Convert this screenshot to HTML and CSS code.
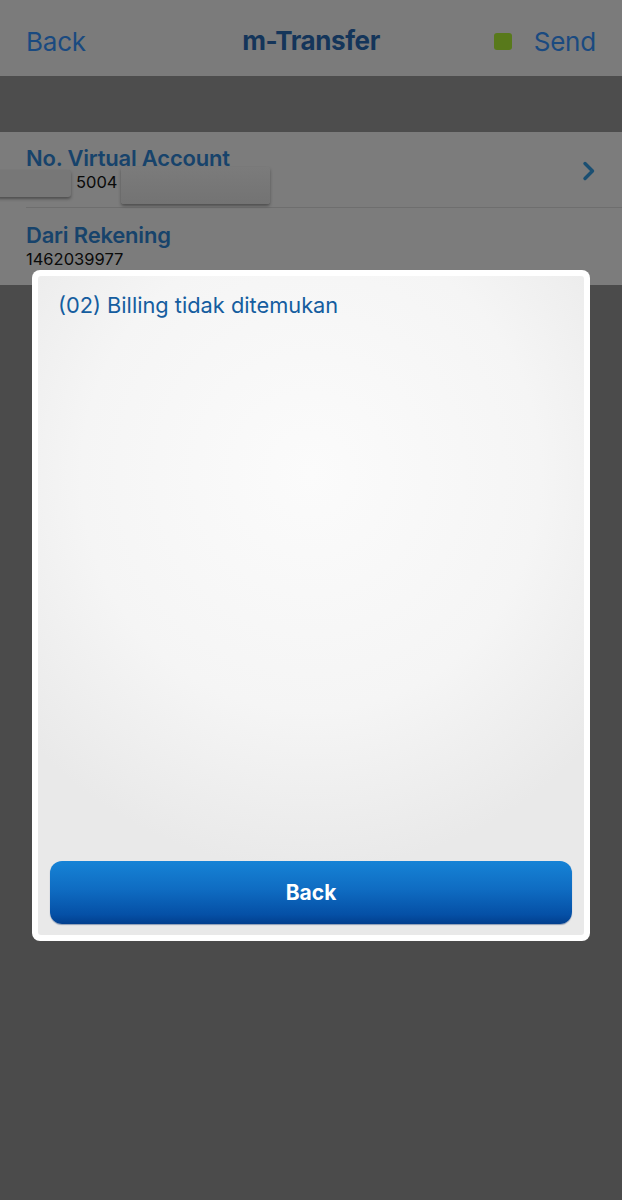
FILE: index.html
```html
<!DOCTYPE html>
<html>
<head>
<meta charset="utf-8">
<link rel="stylesheet" href="styles.css">
</head>
<body>
<div class="screen">
  <header class="nav">
    <span class="nav-back">Back</span>
    <span class="nav-title">m-Transfer</span>
    <span class="nav-right"><span class="status-dot"></span><span class="nav-send">Send</span></span>
  </header>
  <div class="gap-band"></div>
  <section class="list">
    <div class="row row-first">
      <div class="row-body">
        <div class="row-label">No. Virtual Account</div>
        <div class="row-value va-value"><span class="blur blur-a"></span><span class="va-digits">5004</span><span class="blur blur-b"></span></div>
      </div>
      <svg class="chevron" width="14" height="20" viewBox="0 0 14 20"><path d="M3 2.5 L10.5 10 L3 17.5" fill="none" stroke="#1a4f72" stroke-width="3.4" stroke-linecap="round" stroke-linejoin="round"/></svg>
    </div>
    <div class="row">
      <div class="row-body">
        <div class="row-label">Dari Rekening</div>
        <div class="row-value">1462039977</div>
      </div>
    </div>
  </section>
  <div class="bg-rest"></div>

  <div class="modal">
    <div class="modal-inner">
      <p class="modal-msg">(02) Billing tidak ditemukan</p>
      <button class="modal-btn">Back</button>
    </div>
  </div>
</div>
</body>
</html>
```
FILE: styles.css
```css
html, body {
  margin: 0;
  padding: 0;
}
body {
  background: #4b4b4b;
  font-family: Inter, "Liberation Sans", Arial, sans-serif;
}
.screen {
  position: relative;
  width: 622px;
  height: 1200px;
  overflow: hidden;
  background: #4b4b4b;
}
.nav {
  height: 76px;
  background: #7b7b7b;
  display: flex;
  align-items: center;
  justify-content: space-between;
  padding: 6px 26px 0 26px;
  box-sizing: border-box;
  position: relative;
}
.nav-back, .nav-send {
  font-size: 26px;
  color: #1a4a80;
  letter-spacing: -0.2px;
}
.nav-title {
  position: absolute;
  left: 0;
  right: 0;
  top: 25px;
  text-align: center;
  font-size: 26px;
  font-weight: 700;
  color: #14355a;
  letter-spacing: -0.4px;
  pointer-events: none;
}
.nav-right {
  display: flex;
  align-items: center;
  gap: 22px;
}
.status-dot {
  width: 18px;
  height: 17px;
  border-radius: 3px;
  background: #58791b;
}
.gap-band {
  height: 56px;
  background: #4d4d4d;
}
.list {
  background: #7c7c7c;
}
.row {
  display: flex;
  align-items: center;
  padding-left: 26px;
  padding-right: 26px;
  height: 77px;
  box-sizing: border-box;
}
.row-first {
  height: 76px;
  border-bottom: 1px solid #6e6e6e;
  margin-left: 26px;
  padding-left: 0;
}
.row-body {
  flex: 1;
  display: flex;
  flex-direction: column;
  margin-top: -1px;
}
.row-label {
  font-size: 22px;
  font-weight: 600;
  color: #17436b;
  line-height: 26px;
  letter-spacing: -0.2px;
}
.row-value {
  font-size: 16.5px;
  color: #0a0a0a;
  line-height: 22px;
}
.va-value {
  display: flex;
  align-items: center;
  position: relative;
  height: 22px;
}
.va-digits {
  margin-left: 50px;
}
.blur {
  position: absolute;
  background: #777777;
  border-radius: 3px;
  box-shadow: 0 2px 3px rgba(35,35,35,0.5);
}
.blur-a {
  left: -30px;
  top: -1px;
  width: 75px;
  height: 27px;
}
.blur-b {
  left: 95px;
  top: -4px;
  width: 149px;
  height: 37px;
  background: linear-gradient(#7b7b7b, #737373);
}
.chevron {
  margin-right: 0;
  margin-top: 2px;
}
.modal {
  position: absolute;
  left: 32px;
  top: 270px;
  width: 558px;
  height: 671px;
  background: #ffffff;
  border-radius: 8px;
  padding: 6px;
  box-sizing: border-box;
}
.modal-inner {
  height: 100%;
  border-radius: 3px;
  background: radial-gradient(ellipse 70% 60% at 50% 30%, #fbfbfb 0%, #f5f5f5 60%, #e9e9e9 100%);
  display: flex;
  flex-direction: column;
  justify-content: space-between;
  padding: 15px 12px 11px 12px;
  box-sizing: border-box;
}
.modal-msg {
  margin: 0;
  padding-left: 8px;
  font-size: 21.8px;
  line-height: 28px;
  color: #155d9f;
}
.modal-btn {
  height: 63px;
  border: none;
  border-radius: 12px;
  background: linear-gradient(#1683d6 0%, #0f6cc2 45%, #0550a6 85%, #023f8e 100%);
  color: #ffffff;
  font-family: Inter, "Liberation Sans", Arial, sans-serif;
  font-size: 21px;
  font-weight: 700;
  box-shadow: 0 1px 1px rgba(0,40,100,0.4);
}
```
